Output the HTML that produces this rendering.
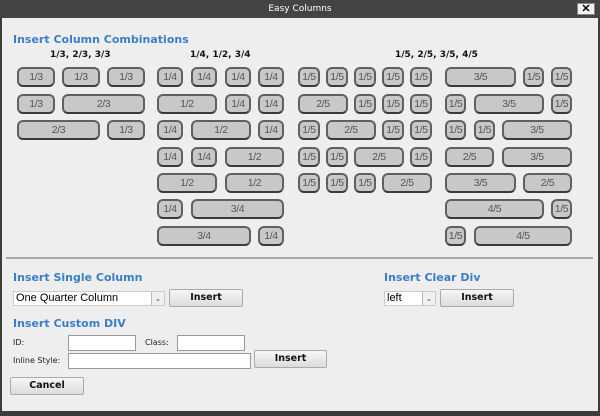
<!DOCTYPE html>
<html><head><meta charset="utf-8"><style>
*{margin:0;padding:0;box-sizing:border-box}
body{width:600px;height:416px;background:#3c3c3c;position:relative;overflow:hidden;font-family:"DejaVu Sans",Verdana,sans-serif}
#win{position:absolute;left:2px;top:18px;width:596px;height:393px;background:#eeeeee}
#title{position:absolute;left:0;top:0;width:600px;height:18px;background:#444;color:#fff;font:9px "DejaVu Sans",sans-serif;text-align:center;line-height:18px}
#x{position:absolute;left:577px;top:3px;width:18px;height:12px;background:#f4f4f4;border:1px solid #888;font:bold 11px "Liberation Sans",sans-serif;line-height:10px;text-align:center;color:#000}
.b{position:absolute;height:20px;background:#c8c8c8;border:2px solid #606060;border-bottom-color:#3a3a3a;border-radius:6px;font:10.5px "Liberation Sans",Arial,sans-serif;color:#555;text-align:center;line-height:16px;letter-spacing:-.4px}
h2{position:absolute;color:#3b7fc6;font:bold 11px "DejaVu Sans",Verdana,sans-serif}
.s{position:absolute;font:bold 9px "DejaVu Sans",Verdana,sans-serif;color:#111}
.l{position:absolute;font:8px "DejaVu Sans",Verdana,sans-serif;color:#222}
.in{position:absolute;background:#fff;border:1px solid #999;height:16px}
.btn{position:absolute;height:18px;background:linear-gradient(#f6f6f6,#dcdcdc);border:1px solid #aaa;border-radius:2px;font:bold 9.5px "DejaVu Sans",Verdana,sans-serif;text-align:center;line-height:16px;color:#111}
.sel{position:absolute;background:#fff;border:1px solid #ccc;height:15px;font:11px "Liberation Sans",Arial,sans-serif;line-height:13px;padding-left:2px}
.sel i{position:absolute;right:0;top:0;width:13px;height:13px;border-left:1px solid #bbb;background:#f0f0f0;font:8px sans-serif;font-style:normal;text-align:center;line-height:13px;color:#555}
</style></head><body>
<div id="title">Easy Columns</div><div id="x">✕</div>
<div id="win"></div>
<h2 style="left:13px;top:33px">Insert Column Combinations</h2>
<div class="s" style="left:50px;top:50px">1/3, 2/3, 3/3</div>
<div class="s" style="left:190px;top:50px">1/4, 1/2, 3/4</div>
<div class="s" style="left:395px;top:50px">1/5, 2/5, 3/5, 4/5</div>

<div class="b" style="left:17px;top:67px;width:38px">1/3</div>
<div class="b" style="left:62px;top:67px;width:38px">1/3</div>
<div class="b" style="left:107px;top:67px;width:38px">1/3</div>
<div class="b" style="left:17px;top:94px;width:38px">1/3</div>
<div class="b" style="left:62px;top:94px;width:83px">2/3</div>
<div class="b" style="left:17px;top:120px;width:83px">2/3</div>
<div class="b" style="left:107px;top:120px;width:38px">1/3</div>

<div class="b" style="left:157px;top:67px;width:26px">1/4</div>
<div class="b" style="left:191px;top:67px;width:26px">1/4</div>
<div class="b" style="left:225px;top:67px;width:26px">1/4</div>
<div class="b" style="left:258px;top:67px;width:26px">1/4</div>
<div class="b" style="left:157px;top:94px;width:60px">1/2</div>
<div class="b" style="left:225px;top:94px;width:26px">1/4</div>
<div class="b" style="left:258px;top:94px;width:26px">1/4</div>
<div class="b" style="left:157px;top:120px;width:26px">1/4</div>
<div class="b" style="left:191px;top:120px;width:60px">1/2</div>
<div class="b" style="left:258px;top:120px;width:26px">1/4</div>
<div class="b" style="left:157px;top:147px;width:26px">1/4</div>
<div class="b" style="left:191px;top:147px;width:26px">1/4</div>
<div class="b" style="left:225px;top:147px;width:59px">1/2</div>
<div class="b" style="left:157px;top:173px;width:60px">1/2</div>
<div class="b" style="left:225px;top:173px;width:59px">1/2</div>
<div class="b" style="left:157px;top:199px;width:26px">1/4</div>
<div class="b" style="left:191px;top:199px;width:93px">3/4</div>
<div class="b" style="left:157px;top:226px;width:94px">3/4</div>
<div class="b" style="left:258px;top:226px;width:26px">1/4</div>

<div class="b" style="left:298px;top:67px;width:22px">1/5</div>
<div class="b" style="left:326px;top:67px;width:22px">1/5</div>
<div class="b" style="left:354px;top:67px;width:22px">1/5</div>
<div class="b" style="left:382px;top:67px;width:22px">1/5</div>
<div class="b" style="left:410px;top:67px;width:22px">1/5</div>
<div class="b" style="left:298px;top:94px;width:50px">2/5</div>
<div class="b" style="left:354px;top:94px;width:22px">1/5</div>
<div class="b" style="left:382px;top:94px;width:22px">1/5</div>
<div class="b" style="left:410px;top:94px;width:22px">1/5</div>
<div class="b" style="left:298px;top:120px;width:22px">1/5</div>
<div class="b" style="left:326px;top:120px;width:50px">2/5</div>
<div class="b" style="left:382px;top:120px;width:22px">1/5</div>
<div class="b" style="left:410px;top:120px;width:22px">1/5</div>
<div class="b" style="left:298px;top:147px;width:22px">1/5</div>
<div class="b" style="left:326px;top:147px;width:22px">1/5</div>
<div class="b" style="left:354px;top:147px;width:50px">2/5</div>
<div class="b" style="left:410px;top:147px;width:22px">1/5</div>
<div class="b" style="left:298px;top:173px;width:22px">1/5</div>
<div class="b" style="left:326px;top:173px;width:22px">1/5</div>
<div class="b" style="left:354px;top:173px;width:22px">1/5</div>
<div class="b" style="left:382px;top:173px;width:50px">2/5</div>

<div class="b" style="left:445px;top:67px;width:71px">3/5</div>
<div class="b" style="left:523px;top:67px;width:21px">1/5</div>
<div class="b" style="left:551px;top:67px;width:21px">1/5</div>
<div class="b" style="left:445px;top:94px;width:21px">1/5</div>
<div class="b" style="left:474px;top:94px;width:70px">3/5</div>
<div class="b" style="left:551px;top:94px;width:21px">1/5</div>
<div class="b" style="left:445px;top:120px;width:21px">1/5</div>
<div class="b" style="left:474px;top:120px;width:21px">1/5</div>
<div class="b" style="left:502px;top:120px;width:70px">3/5</div>
<div class="b" style="left:445px;top:147px;width:49px">2/5</div>
<div class="b" style="left:502px;top:147px;width:70px">3/5</div>
<div class="b" style="left:445px;top:173px;width:71px">3/5</div>
<div class="b" style="left:523px;top:173px;width:49px">2/5</div>
<div class="b" style="left:445px;top:199px;width:99px">4/5</div>
<div class="b" style="left:551px;top:199px;width:21px">1/5</div>
<div class="b" style="left:445px;top:226px;width:21px">1/5</div>
<div class="b" style="left:474px;top:226px;width:98px">4/5</div>

<div style="position:absolute;left:6px;top:257px;width:587px;height:2px;background:#a8a8a8"></div>

<h2 style="left:13px;top:271px">Insert Single Column</h2>
<div class="sel" style="left:13px;top:291px;width:152px">One Quarter Column<i>⌄</i></div>
<div class="btn" style="left:169px;top:289px;width:74px">Insert</div>
<h2 style="left:384px;top:271px">Insert Clear Div</h2>
<div class="sel" style="left:384px;top:291px;width:52px">left<i>⌄</i></div>
<div class="btn" style="left:440px;top:289px;width:74px">Insert</div>

<h2 style="left:13px;top:317px">Insert Custom DIV</h2>
<div class="l" style="left:13px;top:338px">ID:</div>
<div class="in" style="left:68px;top:335px;width:68px"></div>
<div class="l" style="left:145px;top:338px">Class:</div>
<div class="in" style="left:177px;top:335px;width:68px"></div>
<div class="l" style="left:13px;top:356px">Inline Style:</div>
<div class="in" style="left:68px;top:353px;width:183px"></div>
<div class="btn" style="left:254px;top:350px;width:73px">Insert</div>
<div class="btn" style="left:10px;top:377px;width:74px">Cancel</div>
</body></html>
